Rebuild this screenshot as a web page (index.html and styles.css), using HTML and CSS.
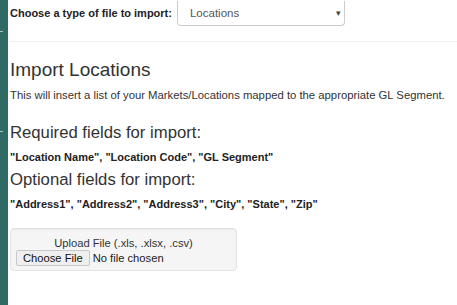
FILE: index.html
```html
<!DOCTYPE html>
<html lang="en">
<head>
    <meta charset="UTF-8">
    <meta name="viewport" content="width=device-width, initial-scale=1.0">
    <title>Import</title>
    <link rel="stylesheet" href="styles.css">
</head>
<body>
    <div class="sidebar">
        <span class="tick tick-top"></span>
        <span class="tick tick-mid"></span>
    </div>

    <div class="content">
        <div class="type-row">
            <label for="fileType">Choose a type of file to import:</label>
            <div class="select-box">
                <span>Locations</span>
                <span class="caret">&#9662;</span>
            </div>
        </div>

        <hr>

        <h2>Import Locations</h2>
        <p class="intro">This will insert a list of your Markets/Locations mapped to the appropriate GL Segment.</p>

        <h3 class="first">Required fields for import:</h3>
        <p class="fields">"Location Name", "Location Code", "GL Segment"</p>

        <h3>Optional fields for import:</h3>
        <p class="fields">"Address1", "Address2", "Address3", "City", "State", "Zip"</p>

        <div class="upload">
            <div class="upload-title">Upload File (.xls, .xlsx, .csv)</div>
            <div class="file-row">
                <span class="file-btn">Choose File</span>
                <span class="file-name">No file chosen</span>
            </div>
        </div>
    </div>
</body>
</html>
```

FILE: styles.css
```css
body {
    font-family: "Liberation Sans", Arial, sans-serif;
    margin: 0;
    display: flex;
    min-height: 305px;
    color: #333;
    background-color: #fff;
}

.sidebar {
    width: 8px;
    background-color: #2f6a64;
    flex-shrink: 0;
    position: relative;
}

.tick {
    position: absolute;
    left: 0;
    width: 3px;
    height: 1px;
    background-color: #a9c4c1;
}

.tick-top {
    top: 31px;
}

.tick-mid {
    top: 131px;
}

.content {
    flex: 1;
    padding-left: 2px;
}

.type-row {
    display: flex;
    align-items: center;
    height: 26px;
}

.type-row label {
    font-size: 11px;
    font-weight: bold;
    color: #222;
    margin-right: 5px;
}

.select-box {
    width: 168px;
    height: 25px;
    box-sizing: border-box;
    border: 1px solid #ccc;
    border-top: none;
    border-radius: 0 0 4px 4px;
    display: flex;
    align-items: center;
    justify-content: space-between;
    padding: 0 3px 0 12px;
    font-size: 11.5px;
    color: #555;
}

.caret {
    font-size: 9px;
    color: #444;
}

hr {
    border: none;
    border-top: 1px solid #eee;
    margin: 15px 0 0 0;
}

h2 {
    font-size: 19px;
    font-weight: normal;
    margin: 17px 0 0 0;
    color: #333;
}

.intro {
    font-size: 11.3px;
    margin: 8px 0 0 0;
}

h3 {
    font-size: 16.7px;
    font-weight: normal;
    margin: 7px 0 0 0;
}

h3.first {
    margin-top: 22px;
}

.fields {
    font-size: 11px;
    font-weight: bold;
    color: #222;
    margin: 8px 0 0 0;
}

.upload {
    width: 227px;
    box-sizing: border-box;
    margin-top: 18px;
    background-color: #f5f5f5;
    border: 1px solid #e3e3e3;
    border-radius: 4px;
    padding: 8px 5px 4px 5px;
    box-shadow: inset 0 1px 1px rgba(0, 0, 0, 0.05);
}

.upload-title {
    text-align: center;
    font-size: 11.2px;
    color: #333;
}

.file-row {
    display: flex;
    align-items: center;
    margin-top: 1px;
    font-size: 11.2px;
}

.file-btn {
    background-color: #efefef;
    border: 1px solid #c8c8c8;
    border-radius: 2px;
    padding: 1px 6px;
    color: #111;
}

.file-name {
    margin-left: 3px;
    color: #222;
}
```
